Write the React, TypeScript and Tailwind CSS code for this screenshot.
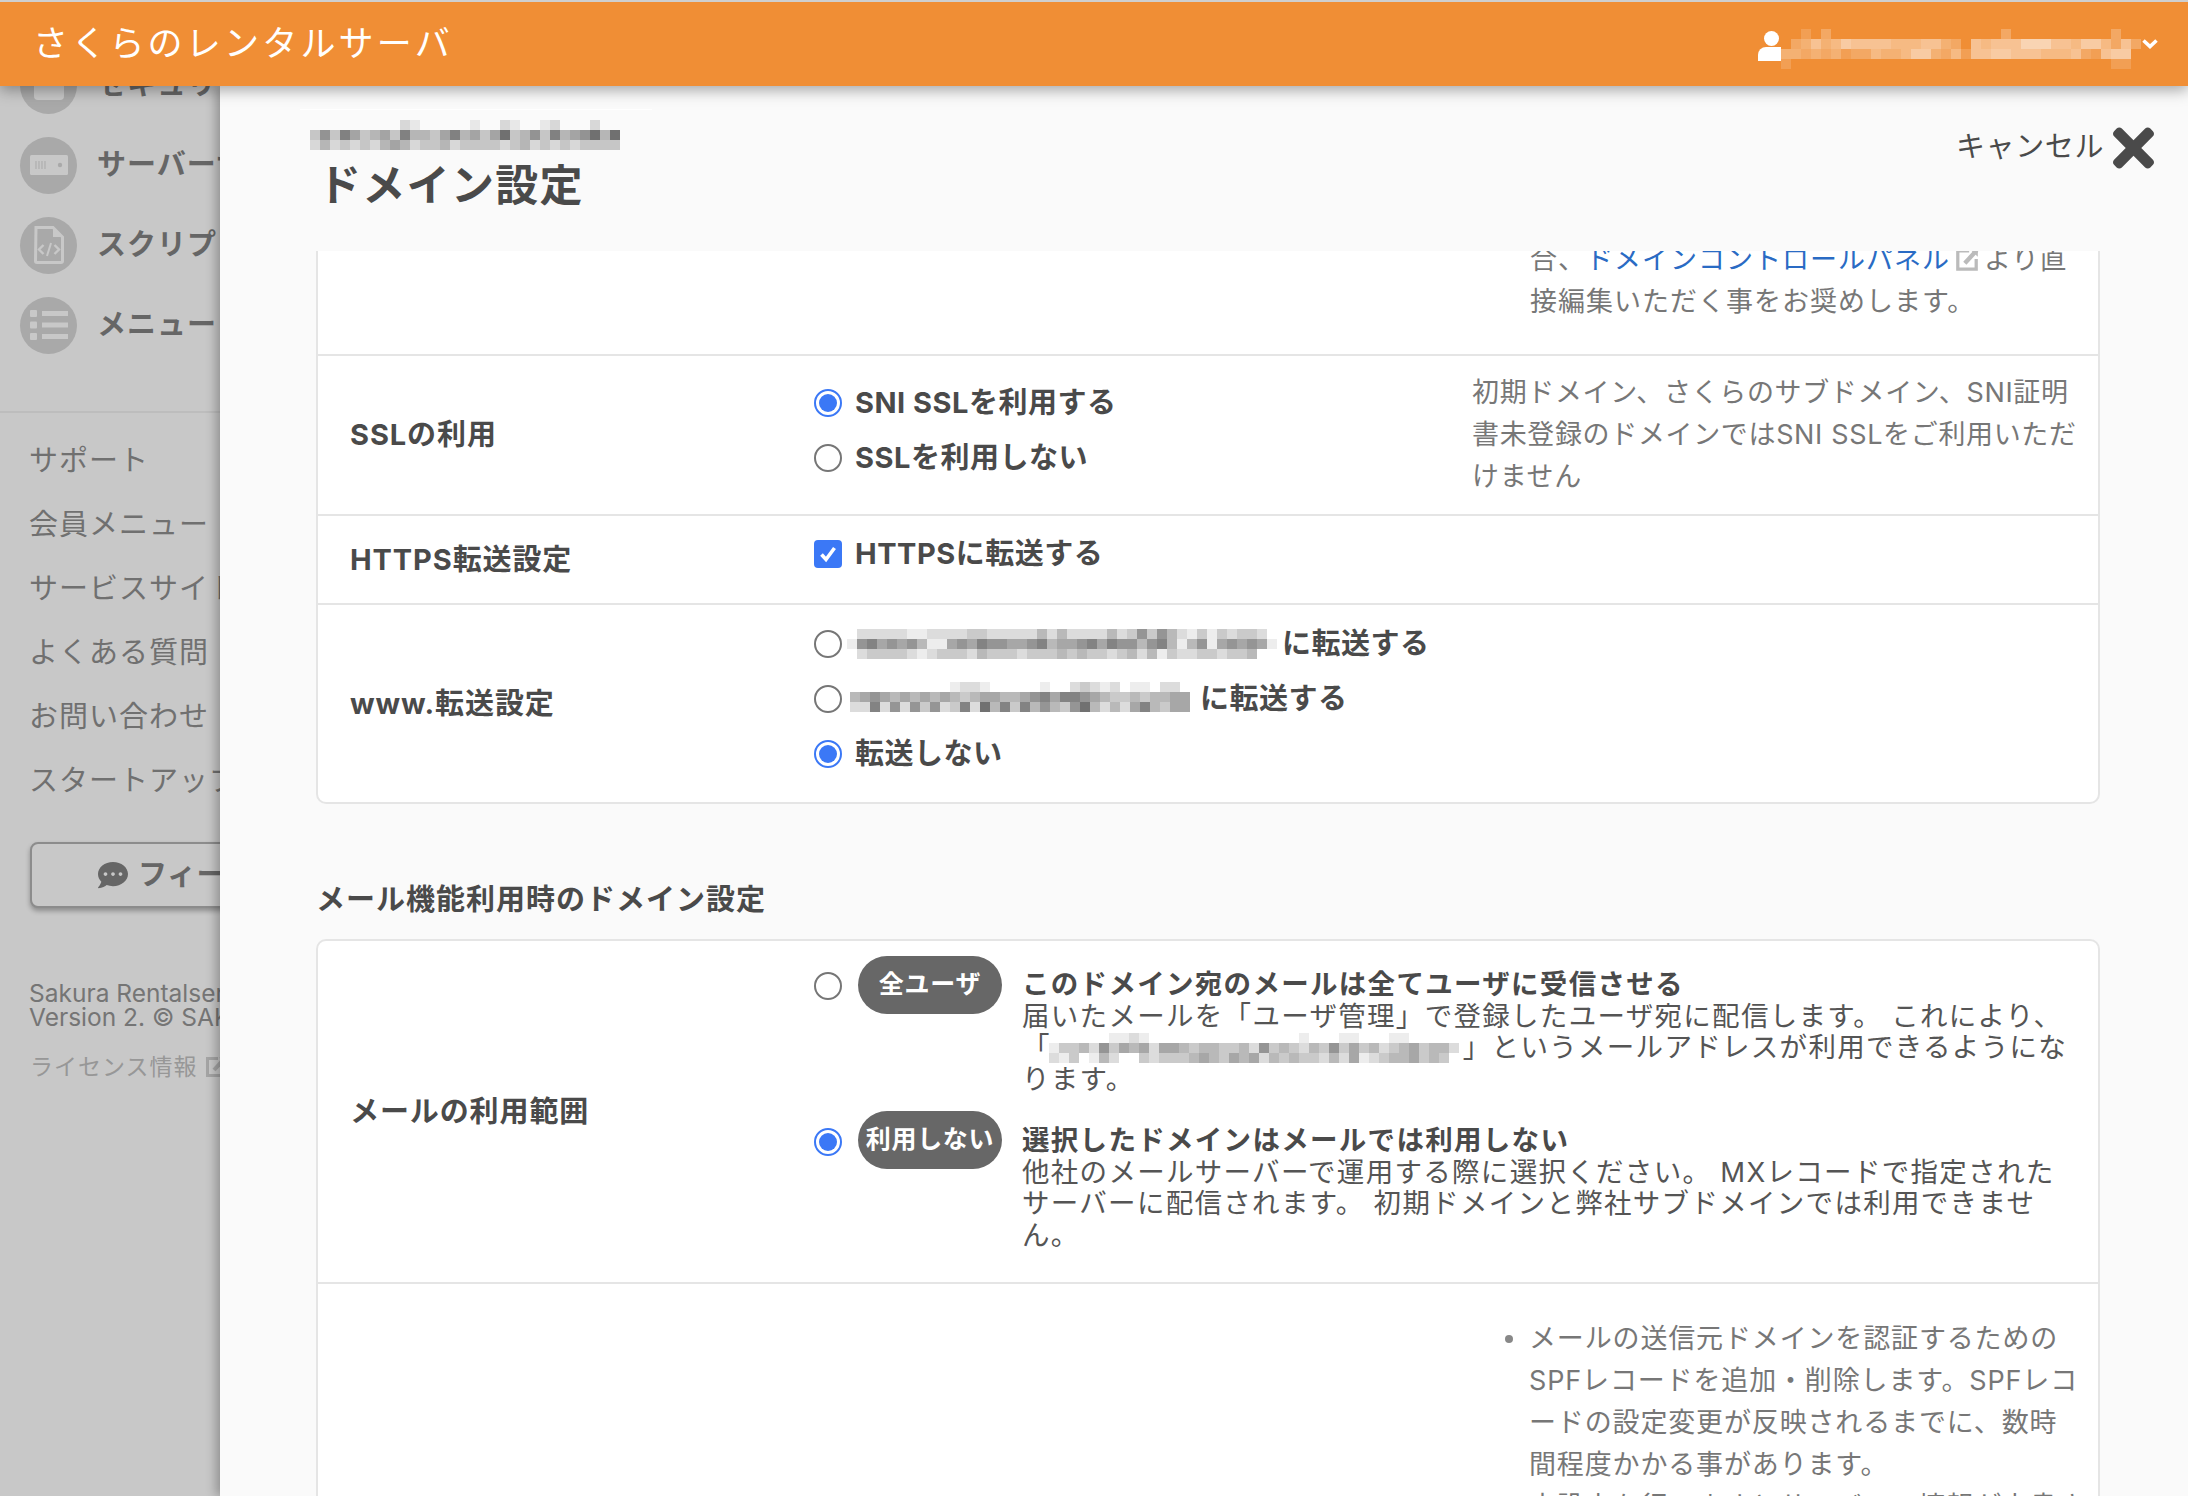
import React from "react";
import { FaTimes, FaCommentDots } from "react-icons/fa";

function Mosaic({ rows, fill, maxOpacity, cell = 10, className = "" }: { rows: string[]; fill: string; maxOpacity: number; cell?: number; className?: string }) {
  const cols = Math.max(...rows.map((r) => r.length));
  return (
    <svg width={cols * cell} height={rows.length * cell} className={"block shrink-0 " + className} shapeRendering="crispEdges">
      {rows.map((r, y) =>
        r.split("").map((c, x) => {
          const v = parseInt(c, 10);
          if (!v) return null;
          return <rect key={x + "-" + y} x={x * cell} y={y * cell} width={cell} height={cell} fill={fill} opacity={(v / 9) * maxOpacity} />;
        })
      )}
    </svg>
  );
}

function Radio({ checked = false }: { checked?: boolean }) {
  return (
    <span className={"flex h-[28px] w-[28px] shrink-0 items-center justify-center rounded-full border-2 bg-white " + (checked ? "border-[#3b78f6]" : "border-[#767676]")}>
      {checked && <span className="block h-[18px] w-[18px] rounded-full bg-[#3b78f6]" />}
    </span>
  );
}

function Checkbox() {
  return (
    <span className="flex h-[28px] w-[28px] shrink-0 items-center justify-center rounded-[4px] bg-[#3b78f6]">
      <svg width="22" height="22" viewBox="0 0 22 22" fill="none">
        <path d="M4.5 11.5 L9 16.5 L17.5 5" stroke="white" strokeWidth="3.6" />
      </svg>
    </span>
  );
}

function ExternalIcon({ className = "" }: { className?: string }) {
  return (
    <svg viewBox="0 0 24 24" className={className} fill="none" stroke="currentColor" strokeWidth="3">
      <path d="M14 3.5H3.5V20.5H20.5V11" />
      <path d="M10 15 L21 3" strokeWidth="4" />
      <path d="M15 2.5 H22 V9" fill="currentColor" stroke="none" />
    </svg>
  );
}

function NavCircle({ children, label }: { children: React.ReactNode; label: string }) {
  return (
    <div className="flex h-[80px] items-center">
      <div className="ml-[20px] flex h-[57px] w-[57px] shrink-0 items-center justify-center rounded-full bg-[#a9a9a9]">{children}</div>
      <span className="ml-[20px] whitespace-nowrap text-[29px] font-bold tracking-[1px] text-[#666666]">{label}</span>
    </div>
  );
}

function SupportLink({ children }: { children: React.ReactNode }) {
  return <div className="flex h-[64px] items-center whitespace-nowrap pl-[29px] text-[29px] tracking-[1px] text-[#707070]">{children}</div>;
}

function Opt({ children }: { children: React.ReactNode }) {
  return <div className="flex h-[55px] items-center gap-[13px] whitespace-nowrap text-[29px] font-bold tracking-[0.5px] text-[#4a4a4a]">{children}</div>;
}

function RowLabel({ children }: { children: React.ReactNode }) {
  return <div className="flex items-center whitespace-nowrap pl-[32px] text-[29px] font-bold tracking-[0.9px] text-[#4a4a4a]">{children}</div>;
}

function Pill({ children }: { children: React.ReactNode }) {
  return <span className="flex h-[58px] w-[144px] shrink-0 items-center justify-center whitespace-nowrap rounded-full bg-[#676767] text-[25px] font-bold tracking-[0.7px] text-white">{children}</span>;
}

const mainFont = "font-['Inter','Noto_Sans_CJK_JP',sans-serif]";

export default function App() {
  return (
    <div className={"flex h-[1496px] w-[2188px] flex-col overflow-hidden bg-[#c8c8c8] " + mainFont}>
      <header className="relative z-20 flex h-[86px] shrink-0 items-center justify-between border-t-2 border-[#cfcfcf] bg-[#f08e35] pl-[33px] pr-[30px] shadow-[0_4px_14px_rgba(0,0,0,0.35)]">
        <span className="mb-[2px] whitespace-nowrap text-[35px] tracking-[3.2px] text-white">さくらのレンタルサーバ</span>
        <div className="flex items-center">
          <svg width="23" height="30" viewBox="0 0 23 30" className="mt-[4px] shrink-0">
            <circle cx="13.5" cy="7.5" r="7.5" fill="white" />
            <path d="M0 30 V24 a8 8 0 0 1 8 -8 H23 V30 Z" fill="white" />
          </svg>
          <Mosaic
            className="mt-[10px]"
            fill="#ffffff"
            maxOpacity={0.7}
            rows={[
              "002030000000000000000030000000000300",
              "034645766665556643065666888665775363",
              "443434233544577435266776665556326770",
              "200000000000000000000000000000000220",
            ]}
          />
          <svg width="16" height="11" viewBox="0 0 16 11" className="mb-[2px] ml-[1px] shrink-0" fill="none">
            <path d="M1.5 2.5 L8 8.5 L14.5 2.5" stroke="white" strokeWidth="3.6" />
          </svg>
        </div>
      </header>

      <div className="flex min-h-0 flex-1">
        <aside className="relative z-0 w-[220px] shrink-0 overflow-hidden">
          <div className="mt-[-41px] w-[420px]">
            <NavCircle label="セキュリティ">
              <svg width="38" height="38" viewBox="0 0 38 38"><rect x="4" y="4" width="30" height="30" rx="4" fill="#c8c8c8" /></svg>
            </NavCircle>
            <NavCircle label="サーバーサイド">
              <svg width="38" height="20" viewBox="0 0 38 20">
                <rect width="38" height="20" rx="1.5" fill="#c8c8c8" />
                <path d="M6 6v8M9 6v8M12 6v8M15 6v8" stroke="#a9a9a9" strokeWidth="1" />
                <circle cx="30" cy="10" r="2.2" fill="#a9a9a9" />
              </svg>
            </NavCircle>
            <NavCircle label="スクリプト">
              <svg width="30" height="38" viewBox="0 0 30 38">
                <path d="M2 1.5 H19 L28.5 11 V35 a1.5 1.5 0 0 1 -1.5 1.5 H3 a1.5 1.5 0 0 1 -1.5 -1.5 Z" fill="none" stroke="#c8c8c8" strokeWidth="3" />
                <path d="M19 1 V11 H29 Z" fill="#c8c8c8" />
                <path d="M9.5 19 L5 23.5 L9.5 28 M20.5 19 L25 23.5 L20.5 28" fill="none" stroke="#c8c8c8" strokeWidth="2.4" />
                <path d="M17 17 L13 30" stroke="#c8c8c8" strokeWidth="2" />
              </svg>
            </NavCircle>
            <NavCircle label="メニュー">
              <svg width="38" height="30" viewBox="0 0 38 30">
                <rect x="0" y="0" width="7" height="7" rx="1" fill="#c8c8c8" />
                <rect x="0" y="11.5" width="7" height="7" rx="1" fill="#c8c8c8" />
                <rect x="0" y="23" width="7" height="7" rx="1" fill="#c8c8c8" />
                <rect x="12" y="1" width="26" height="5" fill="#c8c8c8" />
                <rect x="12" y="12.5" width="26" height="5" fill="#c8c8c8" />
                <rect x="12" y="24" width="26" height="5" fill="#c8c8c8" />
              </svg>
            </NavCircle>
            <div className="mt-[46px] border-t-2 border-[#bdbdbd] pt-[16px]">
              <SupportLink>サポート</SupportLink>
              <SupportLink>会員メニュー</SupportLink>
              <SupportLink>サービスサイト</SupportLink>
              <SupportLink>よくある質問</SupportLink>
              <SupportLink>お問い合わせ</SupportLink>
              <SupportLink>スタートアップガイド</SupportLink>
            </div>
            <div className="ml-[30px] mt-[29px] flex h-[66px] w-[382px] items-center justify-center rounded-[8px] border-2 border-[#8c8c8c] bg-[#c8c8c8] shadow-[0_3px_5px_rgba(0,0,0,0.3)]">
              <FaCommentDots className="h-[30px] w-[30px] text-[#666666]" />
              <span className="ml-[10px] whitespace-nowrap text-[29px] font-bold tracking-[0.5px] text-[#666666]">フィードバック</span>
            </div>
            <div className="ml-[29px] mt-[73px] whitespace-nowrap text-[24.5px] leading-[24px] text-[#757575]">
              <div>Sakura Rentalserver</div>
              <div>Version 2. © SAKURA internet</div>
            </div>
            <div className="ml-[30px] mt-[26px] flex items-center whitespace-nowrap text-[23px] leading-[24px] tracking-[1px] text-[#979797]">
              ライセンス情報
              <ExternalIcon className="ml-[6px] h-[24px] w-[24px] text-[#a5a5a5]" />
            </div>
          </div>
        </aside>

        <main className="relative z-10 flex min-w-0 flex-1 flex-col bg-[#fafafa] shadow-[-4px_0_10px_rgba(0,0,0,0.28)]">
          <div className="flex h-[165px] shrink-0 justify-between pr-[34px]">
            <div className="pl-[80px] pt-[23px]">
              <div className="h-[1px] w-[352px] bg-white" />
              <Mosaic
                className="ml-[10px] mt-[10px]"
                fill="#444444"
                maxOpacity={0.85}
                rows={[
                  "0000000002100000100210012000200",
                  "3637534537443574535834637456848",
                  "2423232454233423333234232323333",
                ]}
              />
              <h1 className="ml-[18px] mt-[5px] whitespace-nowrap text-[43px] font-bold leading-[60px] tracking-[1.3px] text-[#4a4a4a]">ドメイン設定</h1>
            </div>
            <div className="flex items-start pt-[41px]">
              <span className="mr-[9px] whitespace-nowrap text-[29px] leading-[40px] tracking-[0.6px] text-[#4a4a4a]">キャンセル</span>
              <FaTimes className="mt-[-9px] h-[60px] w-[41px] text-[#4a4a4a]" />
            </div>
          </div>

          <div className="min-h-0 flex-1 overflow-hidden pl-[96px] pr-[88px]">
            <div className="mt-[-12px] rounded-b-[10px] border-2 border-t-0 border-[#e5e5e5] bg-white">
              <div className="h-[117px] border-b-2 border-[#e5e5e5] pl-[1212px] text-[27px] leading-[42px] tracking-[1px] text-[#777777]">
                <div className="flex items-center whitespace-nowrap">
                  合、<span className="text-[#2a6bc4]">ドメインコントロールパネル</span>
                  <ExternalIcon className="mx-[4px] h-[26px] w-[26px] text-[#bbbbbb]" />
                  より直
                </div>
                <div className="whitespace-nowrap">接編集いただく事をお奨めします。</div>
              </div>

              <div className="grid h-[160px] grid-cols-[496px_658px_1fr] border-b-2 border-[#e5e5e5]">
                <RowLabel>SSLの利用</RowLabel>
                <div className="pt-[19px]">
                  <Opt><Radio checked />SNI SSLを利用する</Opt>
                  <Opt><Radio />SSLを利用しない</Opt>
                </div>
                <div className="pt-[16px] text-[27px] leading-[42px] tracking-[0.65px] text-[#777777]">
                  <div className="whitespace-nowrap">初期ドメイン、さくらのサブドメイン、SNI証明</div>
                  <div className="whitespace-nowrap">書未登録のドメインではSNI SSLをご利用いただ</div>
                  <div className="whitespace-nowrap">けません</div>
                </div>
              </div>

              <div className="grid h-[89px] grid-cols-[496px_1fr] border-b-2 border-[#e5e5e5]">
                <RowLabel>HTTPS転送設定</RowLabel>
                <div className="pt-[10px]">
                  <Opt><Checkbox />HTTPSに転送する</Opt>
                </div>
              </div>

              <div className="grid h-[197px] grid-cols-[496px_1fr]">
                <RowLabel>www.転送設定</RowLabel>
                <div className="pt-[11px]">
                  <Opt>
                    <Radio />
                    <span className="ml-[-8px] flex items-center gap-[5px]">
                      <Mosaic
                        fill="#444444"
                        maxOpacity={0.85}
                        rows={[
                          "0222221122223322222424222242363642131323320",
                          "1675656411565766556745567576646741461565651",
                          "0233332123332433323334343323424132233233400",
                        ]}
                      />
                      に転送する
                    </span>
                  </Opt>
                  <Opt>
                    <Radio />
                    <span className="ml-[-5px] flex items-center gap-[10px]">
                      <Mosaic
                        className="mt-[-4px]"
                        fill="#444444"
                        maxOpacity={0.85}
                        rows={[
                          "0000000000122100000100232120110220",
                          "4565454545434554456757765433434455",
                          "2272626362372847374643684242574355",
                        ]}
                      />
                      に転送する
                    </span>
                  </Opt>
                  <Opt><Radio checked />転送しない</Opt>
                </div>
              </div>
            </div>

            <h2 className="mt-[75px] h-[42px] whitespace-nowrap text-[29px] font-bold leading-[42px] tracking-[1px] text-[#4a4a4a]">メール機能利用時のドメイン設定</h2>

            <div className="mt-[18px] rounded-t-[10px] border-2 border-[#e5e5e5] bg-white">
              <div className="grid h-[343px] grid-cols-[496px_1fr] border-b-2 border-[#e5e5e5]">
                <RowLabel>メールの利用範囲</RowLabel>
                <div className="flex flex-col pt-[15px]">
                  <div className="flex h-[155px] items-start">
                    <div className="mt-[16px]"><Radio /></div>
                    <div className="ml-[16px]"><Pill>全ユーザ</Pill></div>
                    <div className="ml-[20px] mt-[13px] w-[1056px] text-[27.5px] leading-[31.5px] tracking-[1.3px] text-[#555555]">
                      <div className="font-bold text-[#4a4a4a]">このドメイン宛のメールは全てユーザに受信させる</div>
                      <div className="whitespace-nowrap">届いたメールを「ユーザ管理」で登録したユーザ宛に配信します。 これにより、</div>
                      <div className="flex h-[31.5px] items-center whitespace-nowrap">
                        <span className="mr-[-2px]">「</span>
                        <Mosaic
                          fill="#444444"
                          maxOpacity={0.85}
                          rows={[
                            "000000112100000000000000010001100011000000",
                            "133426354525543443342634324363534234534420",
                            "213014200323334543545243433242512344534300",
                          ]}
                        />
                        <span className="ml-[-6px]">」というメールアドレスが利用できるようにな</span>
                      </div>
                      <div>ります。</div>
                    </div>
                  </div>
                  <div className="flex items-start">
                    <div className="mt-[17px]"><Radio checked /></div>
                    <div className="ml-[16px]"><Pill>利用しない</Pill></div>
                    <div className="ml-[20px] mt-[14px] w-[1056px] text-[27.5px] leading-[31.5px] tracking-[1.3px] text-[#555555]">
                      <div className="font-bold text-[#4a4a4a]">選択したドメインはメールでは利用しない</div>
                      <div className="whitespace-nowrap">他社のメールサーバーで運用する際に選択ください。 MXレコードで指定された</div>
                      <div className="whitespace-nowrap">サーバーに配信されます。 初期ドメインと弊社サブドメインでは利用できませ</div>
                      <div>ん。</div>
                    </div>
                  </div>
                </div>
              </div>
              <div className="flex h-[260px] pl-[1187px] pt-[34px] text-[27px] leading-[42px] tracking-[0.85px] text-[#777777]">
                <span className="mr-[16px] mt-[17px] block h-[8px] w-[8px] shrink-0 rounded-full bg-[#888888]" />
                <div className="whitespace-nowrap">
                  <div>メールの送信元ドメインを認証するための</div>
                  <div>SPFレコードを追加・削除します。SPFレコ</div>
                  <div>ードの設定変更が反映されるまでに、数時</div>
                  <div>間程度かかる事があります。</div>
                  <div>本設定を行いますとサーバーの情報が上書き</div>
                </div>
              </div>
            </div>
          </div>
        </main>
      </div>
    </div>
  );
}
